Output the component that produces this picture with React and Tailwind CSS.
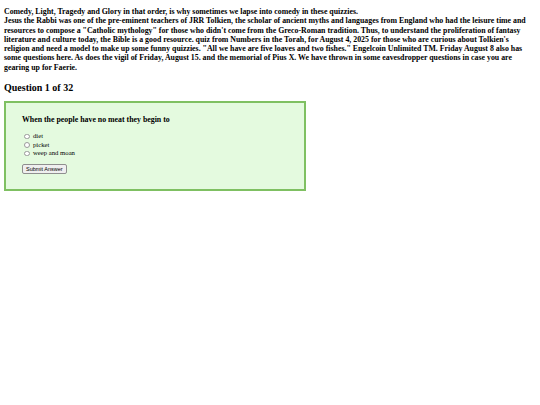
export default function App() {
  const options = ["diet", "picket", "weep and moan"];
  return (
    <div className="bg-white min-h-[405px] px-[4px] pt-[7px] text-black" style={{ fontFamily: '"Liberation Serif", "Times New Roman", serif' }}>
      <p className="text-[7.85px] leading-[9.3px] font-bold">
        Comedy, Light, Tragedy and Glory in that order, is why sometimes we lapse into comedy in these quizzies.
        <br />
        Jesus the Rabbi was one of the pre-eminent teachers of JRR Tolkien, the scholar of ancient myths and languages from England who had the leisure time and resources to compose a "Catholic mythology" for those who didn't come from the Greco-Roman tradition. Thus, to understand the proliferation of fantasy literature and culture today, the Bible is a good resource. quiz from Numbers in the Torah, for August 4, 2025 for those who are curious about Tolkien's religion and need a model to make up some funny quizzies. "All we have are five loaves and two fishes." Engelcoin Unlimited TM. Friday August 8 also has some questions here. As does the vigil of Friday, August 15. and the memorial of Pius X. We have thrown in some eavesdropper questions in case you are gearing up for Faerie.
      </p>
      <h2 className="mt-[9px] text-[10px] leading-[13px] font-bold">Question 1 of 32</h2>
      <div className="mt-[7px] w-[302px] h-[90px] border-2 border-[#7fc062] bg-[#e4fadf] pl-[16px] pt-[12px]">
        <p className="text-[7.85px] leading-[10px] font-bold">When the people have no meat they begin to</p>
        <div className="mt-[7px] flex flex-col">
          {options.map((o) => (
            <label key={o} className="flex items-center h-[8.5px] text-[6.7px] leading-[8px] pl-[2px]">
              <span className="w-[5.5px] h-[5.5px] rounded-full border border-[#9a9a9a] bg-white mr-[3.5px]" />
              {o}
            </label>
          ))}
        </div>
        <button className="block mt-[6.5px] h-[10px] px-[3px] text-[5.5px] leading-[8px] border border-[#8f8f8f] rounded-[2px] bg-[#efefef]" style={{ fontFamily: '"Liberation Sans", Arial, sans-serif' }}>
          Submit Answer
        </button>
      </div>
    </div>
  );
}
